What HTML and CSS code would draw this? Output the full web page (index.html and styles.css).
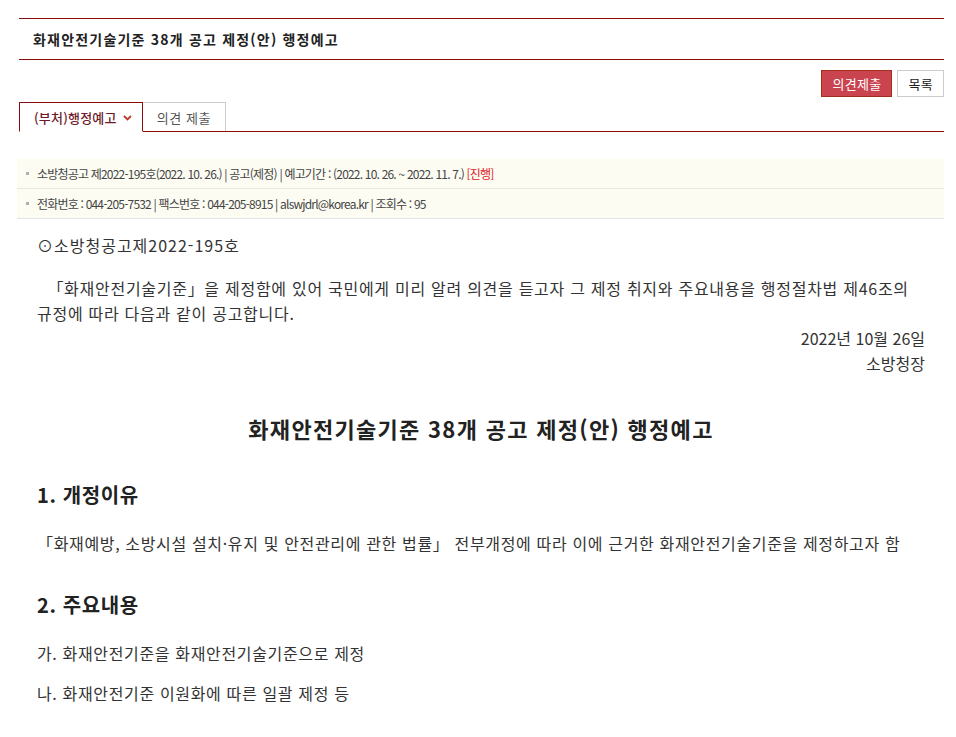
FILE: index.html
```html
<!DOCTYPE html>
<html lang="ko">
<head>
    <meta charset="UTF-8">
    <meta name="viewport" content="width=device-width, initial-scale=1.0">
    <title>화재안전기술기준 38개 공고 제정(안) 행정예고</title>
    <link rel="stylesheet" href="styles.css">
</head>
<body>
<div class="wrap">

    <div class="view-title">화재안전기술기준 38개 공고 제정(안) 행정예고</div>

    <div class="btn-row">
        <a class="btn btn-red" href="#">의견제출</a>
        <a class="btn btn-white" href="#">목록</a>
    </div>

    <div class="tabs">
        <a class="tab active" href="#">(부처)행정예고
            <svg class="chev" width="9" height="6" viewBox="0 0 9 6"><path d="M1 1 L4.5 4.5 L8 1" fill="none" stroke="#c0392b" stroke-width="1.8"/></svg>
        </a>
        <a class="tab" href="#">의견 제출</a>
    </div>

    <div class="info">
        <div class="info-row">소방청공고 제2022-195호(2022. 10. 26.) | 공고(제정) | 예고기간 : (2022. 10. 26. ~ 2022. 11. 7.) <span class="status">[진행]</span></div>
        <div class="info-row">전화번호 : 044-205-7532 | 팩스번호 : 044-205-8915 | alswjdrl@korea.kr | 조회수 : 95</div>
    </div>

    <div class="content">
        <p class="notice-no">⊙소방청공고제2022-195호</p>
        <p class="lead">&nbsp;&nbsp;「화재안전기술기준」을 제정함에 있어 국민에게 미리 알려 의견을 듣고자 그 제정 취지와 주요내용을 행정절차법 제46조의 규정에 따라 다음과 같이 공고합니다.</p>
        <p class="sign">2022년 10월 26일</p>
        <p class="sign">소방청장</p>

        <h2 class="doc-title">화재안전기술기준 38개 공고 제정(안) 행정예고</h2>

        <h3 class="sec">1. 개정이유</h3>
        <p class="body-text">「화재예방, 소방시설 설치·유지 및 안전관리에 관한 법률」 전부개정에 따라 이에 근거한 화재안전기술기준을 제정하고자 함</p>

        <h3 class="sec">2. 주요내용</h3>
        <p class="body-text">가. 화재안전기준을 화재안전기술기준으로 제정</p>
        <p class="body-text">나. 화재안전기준 이원화에 따른 일괄 제정 등</p>
    </div>

</div>
</body>
</html>
```

FILE: styles.css
```css
body {
    margin: 0;
    font-family: "Noto Sans CJK KR", "Noto Sans", sans-serif;
    color: #333;
    background: #fff;
}
a {
    text-decoration: none;
}
.wrap {
    width: 925px;
    margin-left: 19px;
    padding-top: 18px;
}
.view-title {
    border-top: 1px solid #8b0c0c;
    border-bottom: 1px solid #8b0c0c;
    height: 40px;
    line-height: 40px;
    padding-left: 14px;
    font-size: 14px;
    font-weight: bold;
    color: #222;
    letter-spacing: 1.2px;
}
.btn-row {
    display: flex;
    justify-content: flex-end;
    gap: 5px;
    margin-top: 10px;
}
.btn {
    display: block;
    height: 25px;
    line-height: 25px;
    font-size: 13px;
    letter-spacing: 0.3px;
}
.btn-red {
    padding: 0 10px;
    background: #c9444f;
    border: 1px solid #a0301c;
    color: #fff;
}
.btn-white {
    padding: 0 10px;
    background: #fff;
    border: 1px solid #ccc;
    color: #222;
}
.tabs {
    display: flex;
    margin-top: 5px;
    border-bottom: 1px solid #8b0c0c;
}
.tab {
    display: flex;
    align-items: center;
    gap: 6px;
    height: 28px;
    padding: 0 14px;
    font-size: 13px;
    color: #555;
    border: 1px solid #ccc;
    border-bottom: none;
    border-left: none;
    letter-spacing: 0.6px;
}
.tab.active {
    color: #6e1a2a;
    border: 1px solid #8b0c0c;
    border-bottom: 1px solid #fff;
    margin-bottom: -1px;
    padding: 0 10px 0 14px;
    font-weight: 500;
    letter-spacing: 0.2px;
}
.chev {
    margin-top: 1px;
}
.info {
    margin-top: 27px;
    margin-left: -2px;
    border-bottom: 1px solid #e3e3e3;
}
.info-row {
    background: #fcfcf3;
    height: 29px;
    line-height: 29px;
    font-size: 12px;
    color: #444;
    padding-left: 20px;
    position: relative;
    letter-spacing: -0.8px;
}
.info-row + .info-row {
    border-top: 1px solid #e8e8e0;
}
.info-row::before {
    content: "";
    position: absolute;
    left: 9px;
    top: 13px;
    width: 3px;
    height: 3px;
    background: #b0b0b0;
}
.status {
    color: #e0161c;
}
.content {
    padding: 0 19px 0 18px;
    font-size: 16px;
    color: #333;
}
.content p {
    margin: 0;
}
.notice-no {
    margin-top: 14px !important;
    line-height: 25px;
    letter-spacing: 1px;
}
.lead {
    margin-top: 18px !important;
    line-height: 25px;
    letter-spacing: 0.72px;
}
.sign {
    text-align: right;
    line-height: 25px;
}
.doc-title {
    text-align: center;
    font-size: 22px;
    font-weight: bold;
    color: #222;
    margin: 37px 0 0;
    line-height: 30px;
    letter-spacing: 1.3px;
}
.sec {
    font-size: 20px;
    font-weight: bold;
    color: #222;
    margin: 39px 0 0;
    line-height: 26px;
    letter-spacing: 0.6px;
}
.body-text {
    line-height: 24px;
    color: #333;
    letter-spacing: 0.65px;
}
.sec + .body-text {
    margin-top: 23px !important;
}
.body-text + .sec {
    margin-top: 37px;
}
.body-text + .body-text {
    margin-top: 16px !important;
}
```
